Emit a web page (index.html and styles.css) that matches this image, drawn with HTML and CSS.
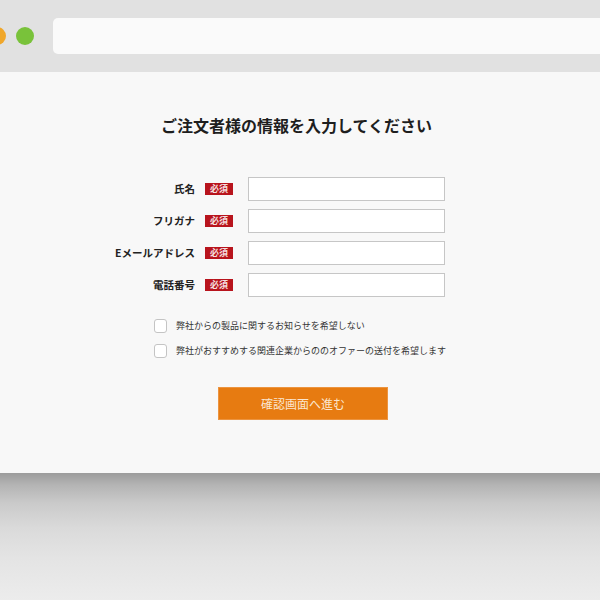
FILE: index.html
```html
<!DOCTYPE html>
<html lang="ja">
<head>
<meta charset="utf-8">
<title>ご注文者様の情報</title>
<link rel="stylesheet" href="styles.css">
</head>
<body>
<div class="window">
  <div class="topbar">
    <div class="dots">
      <span class="dot red"></span>
      <span class="dot orange"></span>
      <span class="dot green"></span>
    </div>
    <div class="address"></div>
  </div>
  <div class="content">
    <h1 class="title">ご注文者様の情報を入力してください</h1>
    <div class="fields">
      <div class="label">氏名</div><span class="badge">必須</span><div class="input"></div>
      <div class="label">フリガナ</div><span class="badge">必須</span><div class="input"></div>
      <div class="label">Eメールアドレス</div><span class="badge">必須</span><div class="input"></div>
      <div class="label">電話番号</div><span class="badge">必須</span><div class="input"></div>
    </div>
    <div class="checks">
      <div class="check"><span class="box"></span><span class="check-text">弊社からの製品に関するお知らせを希望しない</span></div>
      <div class="check"><span class="box"></span><span class="check-text">弊社がおすすめする関連企業からののオファーの送付を希望します</span></div>
    </div>
    <div class="button">確認画面へ進む</div>
  </div>
</div>
<div class="shadow"></div>
</body>
</html>
```
FILE: styles.css
```css
* { box-sizing: border-box; }
html, body { margin: 0; padding: 0; }
body {
  width: 600px;
  height: 600px;
  overflow: hidden;
  background: #ececec;
  font-family: "Noto Sans CJK JP", "Noto Sans", sans-serif;
}
.topbar {
  height: 72px;
  background: #e1e1e1;
  display: flex;
  align-items: center;
}
.dots {
  display: flex;
  gap: 10px;
  margin-left: -40px;
  width: 83px;
  flex: none;
}
.dot {
  width: 18px;
  height: 18px;
  border-radius: 50%;
  display: block;
  flex: none;
}
.red { background: #e0443e; }
.orange { background: #f0a72b; }
.green { background: #79c23a; }
.address {
  margin-left: 10px;
  flex: 1;
  height: 36px;
  background: #fafafa;
  border-radius: 5px 0 0 5px;
}
.content {
  height: 401px;
  background: #f8f8f8;
  padding-top: 41px;
}
.title {
  margin: 0;
  text-align: center;
  font-size: 16px;
  line-height: 24px;
  font-weight: 700;
  color: #1e1e1e;
  padding-right: 7px;
}
.fields {
  margin: 40px 0 0 100px;
  display: grid;
  grid-template-columns: 95px 33px 197px;
  column-gap: 10px;
  row-gap: 8px;
  align-items: center;
}
.label {
  text-align: right;
  font-size: 10.5px;
  font-weight: 700;
  color: #222;
  line-height: 14px;
}
.badge {
  display: block;
  width: 28px;
  height: 12px;
  background: #b8141d;
  color: #f4dede;
  font-size: 9px;
  line-height: 12px;
  text-align: center;
  font-weight: 700;
  justify-self: start;
}
.input {
  height: 24px;
  background: #fff;
  border: 1px solid #c6c6c6;
}
.checks {
  margin: 22px 0 0 154px;
  display: flex;
  flex-direction: column;
  gap: 11px;
}
.check {
  display: flex;
  align-items: center;
  gap: 9px;
  height: 14px;
}
.box {
  width: 13px;
  height: 14px;
  background: #fff;
  border: 1px solid #c4c4c4;
  border-radius: 3px;
  flex: none;
}
.check-text {
  font-size: 9px;
  color: #333;
  line-height: 14px;
}
.button {
  margin: 29px 0 0 218px;
  width: 170px;
  height: 33px;
  background: #e77b11;
  border: 1px solid #ec9440;
  color: #fbe6d0;
  font-size: 12px;
  line-height: 31px;
  text-align: center;
}
.shadow {
  height: 127px;
  background: linear-gradient(to bottom, #9c9c9c 0px, #b4b4b4 12px, #cacaca 30px, #dadada 55px, #e4e4e4 85px, #ececec 127px);
}
```
